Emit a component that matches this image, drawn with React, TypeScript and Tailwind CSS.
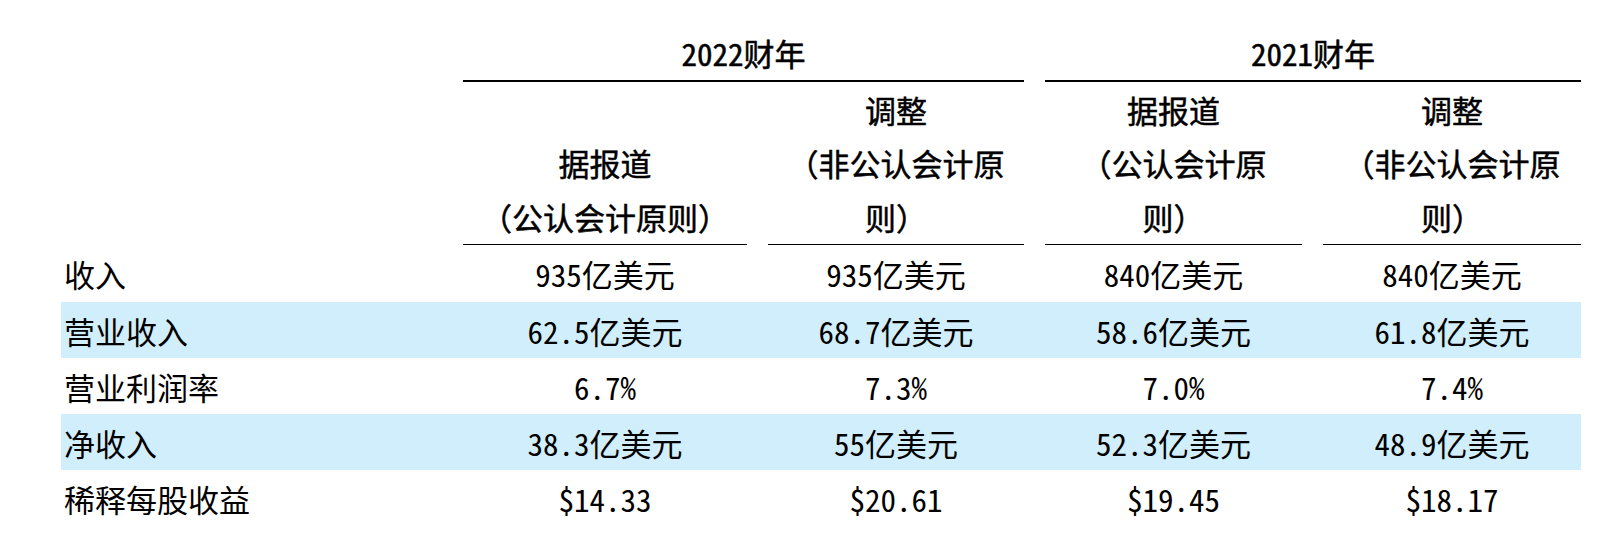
import React from "react";

const cols = "grid grid-cols-[381px_284px_256px_257px_258px] gap-x-[21px]";

const rows: { label: string; vals: string[]; band: boolean }[] = [
  { label: "收入", vals: ["935亿美元", "935亿美元", "840亿美元", "840亿美元"], band: false },
  { label: "营业收入", vals: ["62.5亿美元", "68.7亿美元", "58.6亿美元", "61.8亿美元"], band: true },
  { label: "营业利润率", vals: ["6.7%", "7.3%", "7.0%", "7.4%"], band: false },
  { label: "净收入", vals: ["38.3亿美元", "55亿美元", "52.3亿美元", "48.9亿美元"], band: true },
  { label: "稀释每股收益", vals: ["$14.33", "$20.61", "$19.45", "$18.17"], band: false },
];

const subHeads: string[][] = [
  ["据报道", "（公认会计原则）"],
  ["调整", "（非公认会计原", "则）"],
  ["据报道", "（公认会计原", "则）"],
  ["调整", "（非公认会计原", "则）"],
];

export default function App() {
  return (
    <div className="w-[1616px] h-[536px] bg-white pt-[26px] pl-[61px] text-black text-[31px] font-['Noto_Sans_Mono_CJK_SC','Noto_Sans_CJK_SC',sans-serif]">
      <div className={`${cols} w-[1520px]`}>
        <div />
        <div className="col-span-2 text-center leading-[54px] border-b-2 border-black whitespace-nowrap [font-feature-settings:'hwid'] [-webkit-text-stroke:0.5px_black]">
          2022财年
        </div>
        <div className="col-span-2 text-center leading-[54px] border-b-2 border-black whitespace-nowrap [font-feature-settings:'hwid'] [-webkit-text-stroke:0.5px_black]">
          2021财年
        </div>
        <div />
        {subHeads.map((lines, i) => (
          <div
            key={i}
            className="flex h-[163px] flex-col items-center justify-end pb-[1px] border-b border-black leading-[53.5px] text-center whitespace-nowrap [-webkit-text-stroke:0.5px_black]"
          >
            {lines.map((l, j) => (
              <div key={j}>{l}</div>
            ))}
          </div>
        ))}
      </div>
      <div className="w-[1520px]">
        {rows.map((r, i) => (
          <div
            key={i}
            className={`${cols} items-center ${i === 0 ? "h-[57px]" : "h-[56px]"} ${r.band ? "bg-[#d0eefb]" : ""}`}
          >
            <div className="pl-[3px] whitespace-nowrap leading-none">{r.label}</div>
            {r.vals.map((v, j) => (
              <div key={j} className="text-center whitespace-nowrap leading-none [font-feature-settings:'hwid']">
                {v}
              </div>
            ))}
          </div>
        ))}
      </div>
    </div>
  );
}
